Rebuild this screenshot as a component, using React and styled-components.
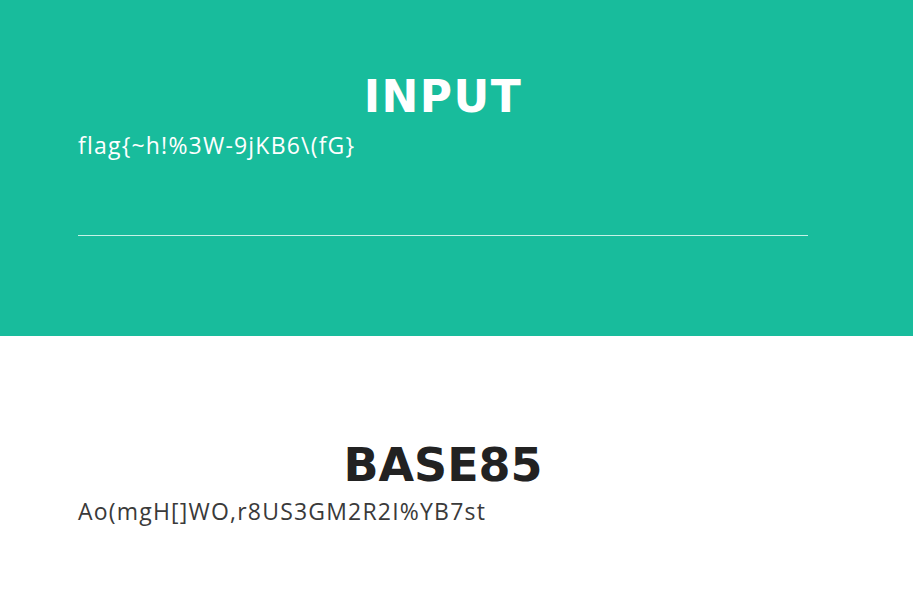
import React from "react"
import styled, { createGlobalStyle } from "styled-components"

const GlobalStyle = createGlobalStyle`
  body {
    margin: 0;
    background: #fff;
    font-family: "Open Sans", "Liberation Sans", sans-serif;
  }
`

const Section = styled.section`
  background: ${(p) => (p.$dark ? "#18bc9c" : "#fff")};
  color: ${(p) => (p.$dark ? "#fff" : "#2c2c2c")};
  height: ${(p) => p.$height}px;
  padding: ${(p) => p.$pad}px 105px 0 78px;
  box-sizing: border-box;
`

const Heading = styled.h2`
  margin: 0;
  text-align: center;
  font-family: "DejaVu Sans", "Liberation Sans", sans-serif;
  font-weight: 700;
  font-size: ${(p) => p.$size}px;
  letter-spacing: ${(p) => p.$spacing || 0}px;
  line-height: 1.2;
  color: ${(p) => (p.$dark ? "#fff" : "#222")};
`

const Value = styled.div`
  margin-top: ${(p) => p.$gap}px;
  font-size: 23px;
  line-height: 30px;
  letter-spacing: 1.2px;
  color: ${(p) => (p.$dark ? "#fff" : "#3a3a3a")};
`

const Underline = styled.div`
  margin-top: 75px;
  height: 1px;
  background: #c6f2e6;
`

const App = () => {
  return (
    <>
      <GlobalStyle />
      <Section $dark $height={336} $pad={71}>
        <Heading $dark $size={44} $spacing={1.5}>INPUT</Heading>
        <Value $dark $gap={6}>flag{"{"}~h!%3W-9jKB6\(fG{"}"}</Value>
        <Underline />
      </Section>
      <Section $height={279} $pad={102}>
        <Heading $size={46}>BASE85</Heading>
        <Value $gap={3}>Ao(mgH[]WO,r8US3GM2R2I%YB7st</Value>
      </Section>
    </>
  )
}

export default App
